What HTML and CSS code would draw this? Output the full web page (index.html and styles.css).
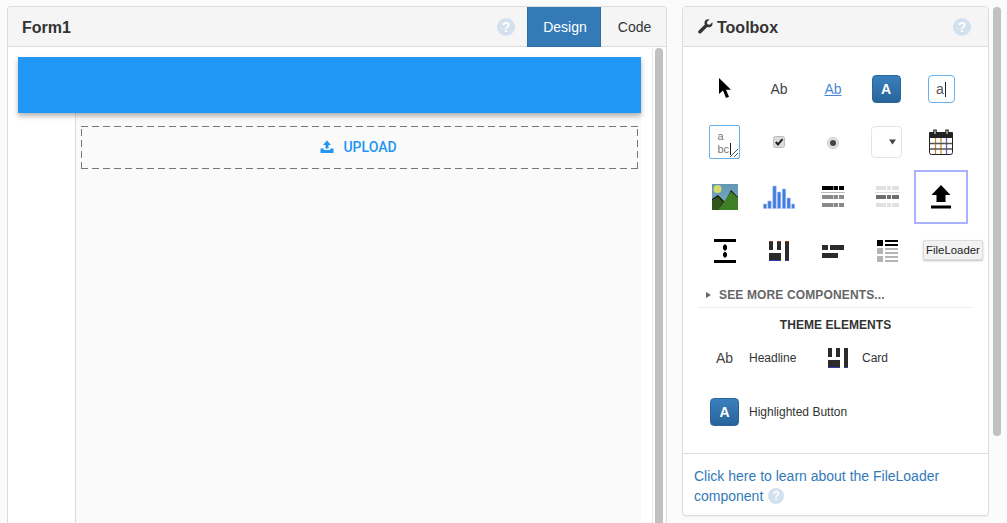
FILE: index.html
```html
<!DOCTYPE html>
<html lang="en">
<head>
<meta charset="utf-8">
<title>Form1</title>
<link rel="stylesheet" href="styles.css">
</head>
<body>
<main class="page">
  <section class="panel form-panel">
    <header class="panel-head form-head">
      <h2 class="panel-title">Form1</h2>
      <span class="help help-form">?</span>
      <div class="tabs">
        <span class="tab tab-active">Design</span>
        <span class="tab">Code</span>
      </div>
    </header>
    <div class="form-body">
      <div class="canvas">
        <div class="app-bar"></div>
        <div class="app-main">
          <div class="app-side"></div>
          <div class="app-content">
            <div class="uploader">
              <svg class="up-icon" viewBox="0 0 14 14" width="14" height="14"><path d="M7 0.500 11 5H8.500V8.500H5.500V5H3ZM0.500 8.500H3.800V10H10.200V8.500H13.500V13H0.500Z" fill="#2196f3"/></svg>
              <span class="up-label">UPLOAD</span>
            </div>
          </div>
        </div>
      </div>
      <div class="inner-scroll"><div class="inner-thumb"></div></div>
    </div>
  </section>

  <section class="panel tool-panel">
    <header class="panel-head tool-head">
      <svg class="wrench" viewBox="0 0 16 16" width="15" height="15"><path d="M15.300 3.500 12.600 6.200 10 5.500 9.500 3.200 12.300 0.500C10.300-0.200 8.100 0.600 7.300 2.300 6.700 3.500 6.800 4.800 7.300 5.800L0.800 12.300C0 13.100 0 14.200 0.700 14.900 1.500 15.700 2.600 15.700 3.400 14.900L9.800 8.400C11 9 12.400 9 13.600 8.300 15.100 7.300 15.800 5.300 15.300 3.500Z" fill="#333"/></svg>
      <h2 class="panel-title">Toolbox</h2>
      <span class="help help-tool">?</span>
    </header>
    <div class="tool-body">
      <div class="tool-grid">
        <div class="cell cell-up"><svg viewBox="0 0 14 22" width="14" height="22"><path d="M1 1V17L5 13.500 8 21 11 19.800 8 12.800H13Z" fill="#000"/></svg></div>
        <div class="cell"><span class="ab">Ab</span></div>
        <div class="cell"><span class="ab ab-link">Ab</span></div>
        <div class="cell cell-left"><span class="btn-a">A</span></div>
        <div class="cell"><span class="input-a"><span class="caret-text">a</span></span></div>

        <div class="cell cell-left cell-up">
          <span class="textarea-a">
            <span class="ta-line">a</span>
            <span class="ta-line"><span class="caret-text">bc</span></span>
            <svg class="grip" viewBox="0 0 8 8" width="8" height="8"><path d="M0 8 8 0M4 8 8 4" stroke="#555" stroke-width="1" fill="none"/></svg>
          </span>
        </div>
        <div class="cell cell-up"><svg viewBox="0 0 12 12" width="12" height="12"><rect x="0.500" y="0.500" width="11" height="11" rx="2" fill="#dcdcdc" stroke="#bbb"/><path d="M2.800 6 5 8.500 9.500 3.200" stroke="#222" stroke-width="2" fill="none"/></svg></div>
        <div class="cell"><svg viewBox="0 0 12 12" width="12" height="12"><circle cx="6" cy="6" r="5.500" fill="#e2e2e2" stroke="#c8c8c8"/><circle cx="6" cy="6" r="3" fill="#444"/></svg></div>
        <div class="cell cell-left cell-up"><span class="select-a"><svg viewBox="0 0 7 6" width="7" height="6"><path d="M0 0.500H7L3.500 5.500Z" fill="#444"/></svg></span></div>
        <div class="cell cell-up"><svg viewBox="0 0 24 26" width="24" height="26">
          <rect x="0.500" y="3.500" width="23" height="22" rx="2" fill="#fff" stroke="#222"/>
          <rect x="0" y="3" width="24" height="6" rx="1" fill="#222"/>
          <path d="M6 0.500V6M18 0.500V6" stroke="#222" stroke-width="3.500"/>
          <path d="M6 1.500V5M18 1.500V5" stroke="#e9d6b0" stroke-width="1.200"/>
          <path d="M6.500 9V25M12 9V25" stroke="#c98a3a" stroke-width="1.300"/>
          <path d="M17.500 9V25" stroke="#7c5ab8" stroke-width="1.300"/>
          <path d="M1 14.500H23M1 20H23" stroke="#555" stroke-width="1.300"/>
        </svg></div>

        <div class="cell"><svg viewBox="0 0 26 26" width="26" height="26">
          <defs><linearGradient id="sky" x1="0" y1="0" x2="0" y2="1"><stop offset="0" stop-color="#5f97b5"/><stop offset="1" stop-color="#84b0bd"/></linearGradient></defs>
          <rect width="26" height="26" fill="url(#sky)"/>
          <circle cx="5.500" cy="5" r="4" fill="#d8d86a"/>
          <path d="M0 15 6 11 13 18 19 6 26 13V26H0Z" fill="#111"/>
          <path d="M0 16 6 12.500 11 18 6 26H0Z" fill="#33551d"/>
          <path d="M6 26 19 7.500 26 14V26Z" fill="#3f7f25"/>
        </svg></div>
        <div class="cell"><svg viewBox="0 0 32 24" width="32" height="24">
          <path d="M0.300 19H3.700V23.500H0.300ZM4.800 16H8.200V23.500H4.800ZM9.800 1H13.200V23.500H9.800ZM14.400 7H17.800V23.500H14.400ZM19.300 4H22.700V23.500H19.300ZM24 13H27.400V23.500H24ZM28.600 19H31.700V23.500H28.600Z" fill="#3f7be0" stroke="#a9c4f2" stroke-width="0.600"/>
        </svg></div>
        <div class="cell"><svg viewBox="0 0 25 22" width="25" height="22">
          <path d="M1 0H12V4H1ZM12.500 0H17V4H12.500ZM18 0H23V4H18Z" fill="#000"/>
          <path d="M0 6.500H24" stroke="#bbb"/>
          <path d="M1 9H12V13H1ZM12.500 9H17V13H12.500ZM18 9H23V13H18ZM1 17H12V21H1ZM12.500 17H17V21H12.500ZM18 17H23V21H18Z" fill="#8a8a8a"/>
        </svg></div>
        <div class="cell"><svg viewBox="0 0 25 22" width="25" height="22">
          <path d="M1 0H11V4H1ZM12 0H16V4H12ZM17 0H24V4H17Z" fill="#e0e0e0"/>
          <path d="M0 6.500H25" stroke="#ddd"/>
          <path d="M1 9H11V13H1ZM12 9H16V13H12ZM17 9H24V13H17Z" fill="#6e6e6e"/>
          <path d="M1 17H11V21H1ZM12 17H16V21H12ZM17 17H24V21H17Z" fill="#e0e0e0"/>
        </svg></div>
        <div class="cell cell-selected"><svg viewBox="0 0 20 24" width="20" height="24"><path d="M10 0 19.500 10H14.500V17H5.500V10H0.500ZM0 20.500H20V23.500H0Z" fill="#000"/></svg></div>

        <div class="cell"><svg viewBox="0 0 22 24" width="22" height="24"><path d="M0 0H22V3H0ZM0 21H22V24H0Z" fill="#000"/><path d="M11 5 13 7V10L11 12 9 10V7ZM11 12.500 13 14.500V17L11 19 9 17V14.500Z" fill="#000"/></svg></div>
        <div class="cell"><svg viewBox="0 0 20 20" width="20" height="20"><path d="M0 0H4V9H0ZM8 0H12V9H8ZM16 0H20V20H16ZM0 12H12V20H0Z" fill="#2b2b2b"/><path d="M0 19.500H12M16 19.500H20" stroke="#2a3fb0"/><path d="M0 0.500H4M8 0.500H12M16 0.500H20" stroke="#8a3a20"/></svg></div>
        <div class="cell"><svg viewBox="0 0 22 13" width="22" height="13"><path d="M0 0H6V5H0ZM8 0H22V5H8ZM0 8H16V13H0Z" fill="#2b2b2b"/></svg></div>
        <div class="cell"><svg viewBox="0 0 21 22" width="21" height="22"><rect width="6" height="6" fill="#000"/><path d="M8 0H21V2H8ZM8 4H21V6H8Z" fill="#000"/><path d="M0 8H6V14H0ZM0 16H6V22H0ZM8 8H21V10H8ZM8 12H21V14H8ZM8 16H21V18H8ZM8 20H21V22H8Z" fill="#b5b5b5"/></svg></div>
      </div>

      <div class="see-more"><span class="tri"></span><span>SEE MORE COMPONENTS...</span></div>
      <h3 class="theme-title">THEME ELEMENTS</h3>
      <div class="theme-row theme-row-first">
        <div class="theme-item theme-headline">
          <span class="theme-icon theme-icon-text"><span class="ab">Ab</span></span>
          <span class="theme-label">Headline</span>
        </div>
        <div class="theme-item">
          <svg class="theme-card" viewBox="0 0 20 20" width="20" height="20"><path d="M0 0H4V9H0ZM8 0H12V9H8ZM16 0H20V20H16ZM0 12H12V20H0Z" fill="#2b2b2b"/><path d="M0 19.500H12M16 19.500H20" stroke="#2a3fb0"/></svg>
          <span class="theme-label">Card</span>
        </div>
      </div>
      <div class="theme-row">
        <div class="theme-item">
          <span class="theme-icon"><span class="btn-a">A</span></span>
          <span class="theme-label">Highlighted Button</span>
        </div>
      </div>
      <div class="tooltip">FileLoader</div>
    </div>
    <footer class="tool-foot">
      <span class="foot-line">Click here to learn about the FileLoader</span>
      <span class="foot-line foot-last"><span>component</span><span class="help help-inline">?</span></span>
    </footer>
  </section>

  <div class="page-scroll"><div class="page-thumb"></div></div>
</main>
</body>
</html>
```

FILE: styles.css
```css
* { box-sizing: border-box; }
html, body { margin: 0; height: 523px; overflow: hidden; }
body { background: #fbfbfb; font-family: "Liberation Sans", Arial, sans-serif; color: #333; }

.page { display: flex; align-items: flex-start; padding: 6px 0 0 7px; height: 523px; overflow: hidden; }

.panel { background: #fff; border: 1px solid #ddd; border-radius: 4px; box-shadow: 0 1px 1px rgba(0,0,0,.05); }
.form-panel { width: 660px; height: 517px; margin-right: 15px; display: flex; flex-direction: column; border-bottom: 0; border-radius: 4px 4px 0 0; overflow: hidden; }
.tool-panel { width: 307px; height: 510px; position: relative; display: flex; flex-direction: column; }

.panel-head { height: 40px; flex: none; background: #f5f5f5; border-bottom: 1px solid #ddd; display: flex; align-items: center; border-radius: 3px 3px 0 0; }
.form-head { padding-left: 14px; }
.panel-title { margin: 2px 0 0; font-size: 16px; font-weight: 700; color: #333; line-height: 20px; }

.help { width: 18px; height: 18px; border-radius: 50%; background: #d3e0ee; color: #fff; font-size: 14px; font-weight: 700; line-height: 18px; text-align: center; display: inline-block; }
.help-form { margin-left: auto; margin-right: 12px; }
.help-tool { margin-left: auto; margin-right: 17px; }
.help-inline { width: 16px; height: 16px; font-size: 12px; line-height: 16px; margin-left: 5px; }

.tabs { display: flex; align-self: stretch; margin-top: -1px; margin-bottom: -1px; }
.tab { width: 65px; padding-left: 2px; display: flex; align-items: center; justify-content: center; font-size: 14px; color: #333; }
.tab-active { width: 74px; background: #337ab7; border: 1px solid #2e6da4; color: #fff; }

.form-body { flex: 1; display: flex; min-height: 0; }
.canvas { flex: 1; padding: 10px 11px 0 10px; min-width: 0; display: flex; flex-direction: column; }
.app-bar { height: 56px; flex: none; background: #2196f3; box-shadow: 0 3px 5px rgba(0,0,0,.3); position: relative; }
.app-main { display: flex; flex: 1; min-height: 0; }
.app-side { width: 58px; flex: none; background: #fff; border-right: 1px solid #ddd; }
.app-content { flex: 1; background: #fafafa; padding: 13px 3px 0 5px; }
.uploader { height: 43px; padding: 0 2px 2px 0; display: flex; align-items: center; justify-content: center; gap: 9px;
  background-image:
    repeating-linear-gradient(90deg, #777 0 7px, transparent 7px 11px),
    repeating-linear-gradient(90deg, #777 0 7px, transparent 7px 11px),
    repeating-linear-gradient(0deg, #777 0 7px, transparent 7px 11px),
    repeating-linear-gradient(0deg, #777 0 7px, transparent 7px 11px);
  background-size: 100% 1px, 100% 1px, 1px 100%, 1px 100%;
  background-position: 0 0, 0 100%, 0 0, 100% 0;
  background-repeat: no-repeat;
}
.up-label { font-family: Roboto, sans-serif; font-size: 14px; font-weight: 500; color: #2196f3; }
.inner-scroll { width: 14px; flex: none; border-left: 1px solid #e8e8e8; padding: 1px 3px 0 2px; }
.inner-thumb { height: 100%; background: #c1c1c1; border-radius: 4px 4px 0 0; }

.tool-head { padding-left: 15px; gap: 4px; }
.tool-body { flex: 1; padding: 15px 15px 0 15px; position: relative; }
.tool-grid { display: grid; grid-template-columns: repeat(5, 54px); grid-auto-rows: 54px; }
.cell { display: flex; align-items: center; justify-content: center; }
.cell-left { padding-right: 2px; }
.cell-up { padding-bottom: 2px; }
.cell-selected { border: 2px solid #a9b1ff; }

.ab { font-size: 14px; color: #444; line-height: 18px; }
.ab-link { color: #4a86d8; text-decoration: underline; }
.btn-a { width: 29px; height: 28px; border-radius: 4px; border: 1px solid #2b669a; background: linear-gradient(#3a80bd, #29649b); color: #fff; font-size: 14px; font-weight: 700; display: flex; align-items: center; justify-content: center; }
.input-a { width: 27px; height: 28px; border: 1px solid #66afe9; border-radius: 4px; background: #fff; display: flex; align-items: center; justify-content: center; font-size: 14px; color: #555; }
.caret-text { border-right: 1px solid #222; line-height: 15px; padding-right: 1px; }
.textarea-a { width: 31px; height: 34px; border: 1px solid #66afe9; border-radius: 2px; background: #fff; position: relative; font-size: 11px; color: #777; padding: 4px 0 0 8px; line-height: 12px; display: block; }
.ta-line { display: block; height: 12px; }
.grip { position: absolute; right: 1px; bottom: 1px; }
.select-a { width: 31px; height: 32px; border: 1px solid #e4e4e4; border-radius: 4px; background: #fff; display: flex; align-items: center; justify-content: flex-end; padding-right: 5px; }

.see-more { display: flex; align-items: center; gap: 8px; margin-top: 6px; height: 24px; padding-left: 8px; padding-bottom: 2px; border-bottom: 1px solid #eee; font-size: 12px; font-weight: 700; color: #666; letter-spacing: .14px; }
.tri { width: 0; height: 0; border-left: 5px solid #666; border-top: 3.500px solid transparent; border-bottom: 3.500px solid transparent; }
.theme-title { margin: 9px 0 0; font-size: 12px; line-height: 16px; font-weight: 700; text-align: center; color: #333; letter-spacing: .05px; }

.theme-row { display: flex; height: 54px; align-items: center; }
.theme-row-first { height: 50px; margin-bottom: 2px; }
.theme-item { display: flex; align-items: center; }
.theme-headline { width: 130px; }
.theme-icon { width: 51px; padding-left: 12px; display: flex; }
.theme-icon-text { padding-left: 18px; }
.theme-card { margin-right: 14px; }
.theme-label { font-size: 12px; color: #333; }

.tooltip { position: absolute; left: 240px; top: 193px; width: 60px; height: 20px; background: #f2f2f2; border: 1px solid #ddd; box-shadow: 0 1px 2px rgba(0,0,0,.25); border-radius: 2px; font-size: 11.400px; color: #222; line-height: 18px; text-align: center; white-space: nowrap; }

.tool-foot { flex: none; height: 62px; border-top: 1px solid #ddd; padding: 12px 10px 0 11px; font-size: 14px; line-height: 20px; color: #337ab7; }
.foot-line { display: block; height: 20px; }
.foot-last { display: flex; align-items: center; }

.page-scroll { width: 15px; height: 523px; margin-top: -6px; padding: 7px 3px 0 3px; margin-left: 1px; flex: none; }
.page-thumb { height: 429px; width: 8px; background: #c1c1c1; border-radius: 4px; }
```
